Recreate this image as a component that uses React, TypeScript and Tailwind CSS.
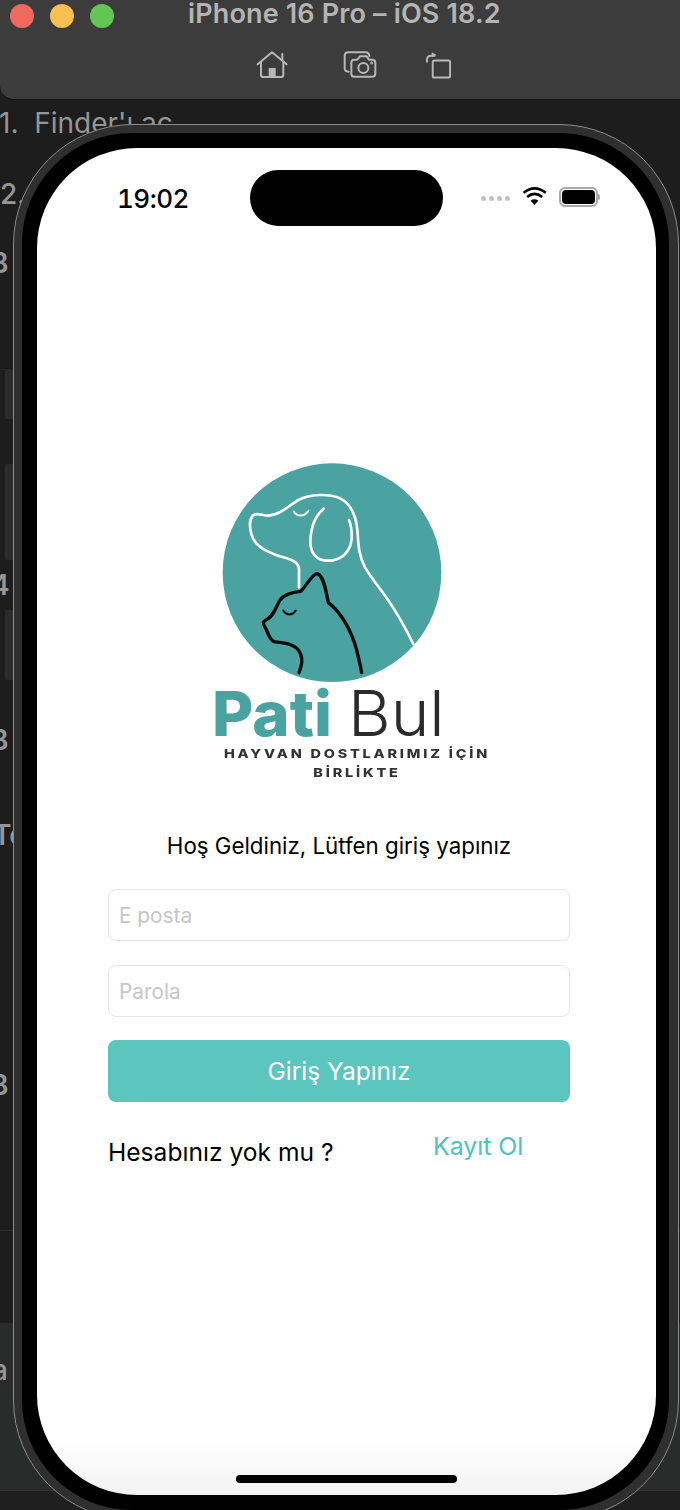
const sans = "[font-family:Inter,sans-serif]";

function HomeIcon() {
  return (
    <svg width="34" height="30" viewBox="30 30 102 90" fill="none" stroke="#b8b8b8" strokeWidth="6" strokeLinecap="round" strokeLinejoin="round">
      <path d="M38 73 L81 37 L125 73" />
      <path d="M112 42 V60" />
      <path d="M48 66 V104 Q48 111 55 111 H108 Q115 111 115 104 V66" />
      <rect x="71" y="84" width="21" height="26" fill="#b8b8b8" stroke="none" />
    </svg>
  );
}

function CameraIcon() {
  return (
    <svg width="35" height="30" viewBox="295 30 105 90" fill="none" stroke="#b8b8b8" strokeWidth="6" strokeLinecap="round" strokeLinejoin="round">
      <path d="M312 95 Q300 95 300 84 V48 Q300 37 311 37 H362 Q373 37 374 48" />
      <path d="M320 68 Q320 59 329 59 H338 L346 49 H366 L373 59 H382 Q392 59 392 68 V101 Q392 110 382 110 H329 Q320 110 320 101 Z" />
      <circle cx="356" cy="84" r="15" />
      <circle cx="381" cy="69" r="1.5" fill="#b8b8b8" />
    </svg>
  );
}

function RotateIcon() {
  return (
    <svg width="27" height="30" viewBox="540 25 84 90" fill="none" stroke="#b8b8b8" strokeWidth="6" strokeLinecap="round" strokeLinejoin="round">
      <rect x="564" y="56" width="54" height="53" rx="5" />
      <path d="M546 60 V54 Q546 41 560 41 H570" />
      <path d="M561 30 L576 39 L561 47" fill="#b8b8b8" stroke="none" />
    </svg>
  );
}

function WifiIcon() {
  return (
    <svg width="25" height="20" viewBox="155 40 78 60" fill="none" stroke="#000" strokeWidth="8" strokeLinecap="butt">
      <path d="M160 60 Q194 32 229 60" />
      <path d="M171 73 Q194 54 218 73" />
      <path d="M194 98 L182 85 Q194 76 206 85 Z" fill="#000" stroke="none" />
    </svg>
  );
}

function Battery() {
  return (
    <div className="flex items-center">
      <div className="w-[39px] h-[20px] rounded-[6px] border-2 border-[#a8a8a8] p-[1px]">
        <div className="w-full h-full rounded-[4px] bg-black" />
      </div>
      <div className="w-[2px] h-[6px] rounded-r-full bg-[#a8a8a8]" />
    </div>
  );
}

function Logo() {
  return (
    <svg width="300" height="340" viewBox="0 0 900 1020" className="blur-[0.4px]">
      <circle cx="396" cy="368" r="328" fill="#4aa3a0" />
      <g fill="none" stroke="#ffffff" strokeWidth="8" strokeLinecap="round" strokeLinejoin="round">
        <path d="M297 412 V358 C296 338 280 330 250 322 C205 308 165 290 155 255 C148 232 148 210 158 197 C170 186 185 196 205 197 C240 195 265 168 295 150 C330 132 385 130 420 145 C455 162 470 200 473 250 C475 290 478 320 495 352 C520 395 555 430 590 490 C610 522 625 552 640 582" />
        <path d="M371 176 C345 198 332 235 331 275 C331 310 350 332 385 332 C425 332 452 305 455 265 C456 245 453 225 447 210" />
        <path d="M282 185 C292 201 312 201 325 183" strokeWidth="6" />
      </g>
      <g fill="none" stroke="#0a0a0a" strokeWidth="10" strokeLinecap="round" strokeLinejoin="round">
        <path d="M297 668 C305 645 312 625 295 600 C278 580 250 578 222 575 C205 565 205 548 197 535 C188 520 188 515 198 510 C222 498 228 470 240 450 C255 430 280 426 302 424 C320 408 335 372 352 371 C372 378 378 425 385 458 C425 488 455 545 470 600 C476 625 482 650 485 668" />
        <path d="M250 482 C260 497 277 497 287 482" strokeWidth="6" />
      </g>
      <text x="36" y="858" fontFamily="Inter, sans-serif" fontWeight="800" fontSize="186" fill="#4aa3a0" textLength="360" lengthAdjust="spacingAndGlyphs">Pati</text>
      <text x="444" y="858" fontFamily="Inter, sans-serif" fontWeight="300" fontSize="190" fill="#2b2b2b" textLength="290" lengthAdjust="spacingAndGlyphs">Bul</text>
      <text x="72" y="925" fontFamily="Inter, sans-serif" fontWeight="800" fontSize="36" letterSpacing="7" fill="#333333" textLength="798" lengthAdjust="spacingAndGlyphs">HAYVAN DOSTLARIMIZ İÇİN</text>
      <text x="340" y="980" fontFamily="Inter, sans-serif" fontWeight="800" fontSize="36" letterSpacing="7" fill="#333333" textLength="262" lengthAdjust="spacingAndGlyphs">BİRLİKTE</text>
    </svg>
  );
}

function BackdropLine({ text, height, className = "" }: { text: string; height: string; className?: string }) {
  return <div className={`flex items-center whitespace-nowrap ${height} ${className}`}>{text}</div>;
}

function Backdrop() {
  return (
    <div className={`w-[680px] h-[1510px] overflow-hidden bg-[#1d1d1d] text-[#969696] text-[28px] ${sans}`}>
      <div className="h-[100px] rounded-bl-[14px] bg-[#3c3c3c] border-b border-[#111111] pt-[4px]">
        <div className="flex items-start pl-[10px]">
          <div className="w-[24px] h-[24px] rounded-full bg-[#f0695f]" />
          <div className="w-[24px] h-[24px] rounded-full bg-[#f6bf4f] ml-[16px]" />
          <div className="w-[24px] h-[24px] rounded-full bg-[#62c554] ml-[16px]" />
          <div className="ml-[74px] -mt-[3px] leading-[26px] text-[27px] tracking-[0.15px] font-semibold text-[#b4b4b4] whitespace-nowrap">iPhone 16 Pro – iOS 18.2</div>
        </div>
        <div className="flex items-start mt-[22px] pl-[255px]">
          <HomeIcon />
          <div className="ml-[54px]">
            <CameraIcon />
          </div>
          <div className="ml-[47px]">
            <RotateIcon />
          </div>
        </div>
      </div>
      <BackdropLine text="1.  Finder'ı aç" height="h-[46px]" className="-ml-[1px] whitespace-pre" />
      <BackdropLine text="2." height="h-[96px]" className="ml-[0px] font-medium" />
      <BackdropLine text="B" height="h-[42px]" className="-ml-[10px] font-semibold" />
      <div className="h-[86px] border-b border-[#262626] mr-[640px]" />
      <div className="w-[9px] h-[49px] ml-[5px] rounded-l-[2px] bg-[#2b2b2b]" />
      <div className="w-[9px] h-[96px] ml-[5px] mt-[45px] rounded-l-[2px] bg-[#2b2b2b]" />
      <BackdropLine text="4" height="h-[50px]" className="-ml-[9px] font-semibold" />
      <div className="w-[9px] h-[70px] ml-[5px] rounded-bl-[2px] bg-[#2b2b2b]" />
      <BackdropLine text="B" height="h-[120px]" className="-ml-[10px] font-semibold" />
      <BackdropLine text="Te" height="h-[70px]" className="-ml-[7px] font-semibold" />
      <div className="h-[361px] pt-[195px] border-b border-[#2c2c2c] leading-[40px] -ml-[10px] font-semibold">B</div>
      <div className="h-[92px]" />
      <div className="h-[167px] bg-[#2a2b2b] pt-[27px] leading-[40px] -ml-[8px] font-medium">a</div>
      <div className="h-[20px] border-t border-[#333333] bg-[#1f1f1f]" />
    </div>
  );
}

function Screen() {
  return (
    <div className={`flex flex-col h-[1347px] rounded-[100px] bg-[linear-gradient(to_bottom,#ffffff_96%,#f2f2f2_100%)] overflow-hidden text-black ${sans}`}>
      <div className="flex items-center h-[56px] mt-[22px] pl-[80px]">
        <div className="w-[133px] text-[26px] font-medium tracking-[-0.5px] tabular-nums">19:02</div>
        <div className="w-[193px] h-[56px] rounded-[28px] bg-black" />
        <div className="flex gap-[3px] ml-[38px]">
          <div className="w-[5px] h-[5px] rounded-full bg-[#c4c4c4]" />
          <div className="w-[5px] h-[5px] rounded-full bg-[#c4c4c4]" />
          <div className="w-[5px] h-[5px] rounded-full bg-[#c4c4c4]" />
          <div className="w-[5px] h-[5px] rounded-full bg-[#c4c4c4]" />
        </div>
        <div className="ml-[12px] -mt-[4px]">
          <WifiIcon />
        </div>
        <div className="ml-[12px] -mt-[2px]">
          <Battery />
        </div>
      </div>

      <div className="flex flex-col pl-[71px] pr-[86px]">
        <div className="mt-[224px] ml-[92px] h-[340px]">
          <Logo />
        </div>
        <p className="mt-[41px] text-center text-[22.3px] leading-[30px]">Hoş Geldiniz, Lütfen giriş yapınız</p>
        <input
          placeholder="E posta"
          className="mt-[28px] h-[52px] px-[10px] rounded-[8px] border border-[#e6e6e6] text-[20.8px] placeholder:text-[#c6c6c8] outline-none"
        />
        <input
          placeholder="Parola"
          className="mt-[24px] h-[52px] px-[10px] rounded-[8px] border border-[#e6e6e6] text-[20.8px] placeholder:text-[#c6c6c8] outline-none"
        />
        <button className="mt-[23px] h-[62px] rounded-[8px] bg-[#5cc5bd] text-white text-[24.5px]">Giriş Yapınız</button>
        <div className="flex items-start mt-[29px]">
          <span className="w-[325px] mt-[6px] text-[24.6px] leading-[30px]">Hesabınız yok mu ?</span>
          <span className="text-[#4cc4bb] text-[24.8px] leading-[30px]">Kayıt Ol</span>
        </div>
      </div>

      <div className="mt-auto mb-[12px] ml-[199px] w-[221px] h-[8px] rounded-full bg-black" />
    </div>
  );
}

export default function App() {
  return (
    <div className="relative w-[680px] h-[1510px] overflow-hidden">
      <Backdrop />
      <div className="absolute left-[13px] top-[124px] w-[666px] h-[1396px] rounded-[120px] border border-[#8c8c8c] bg-[#2f2f2f] pt-[8px] pl-[8px]">
        <div className="w-[647px] h-[1377px] rounded-[110px] bg-black pt-[15px] pl-[15px]">
          <div className="w-[619px]">
            <Screen />
          </div>
        </div>
      </div>
    </div>
  );
}
